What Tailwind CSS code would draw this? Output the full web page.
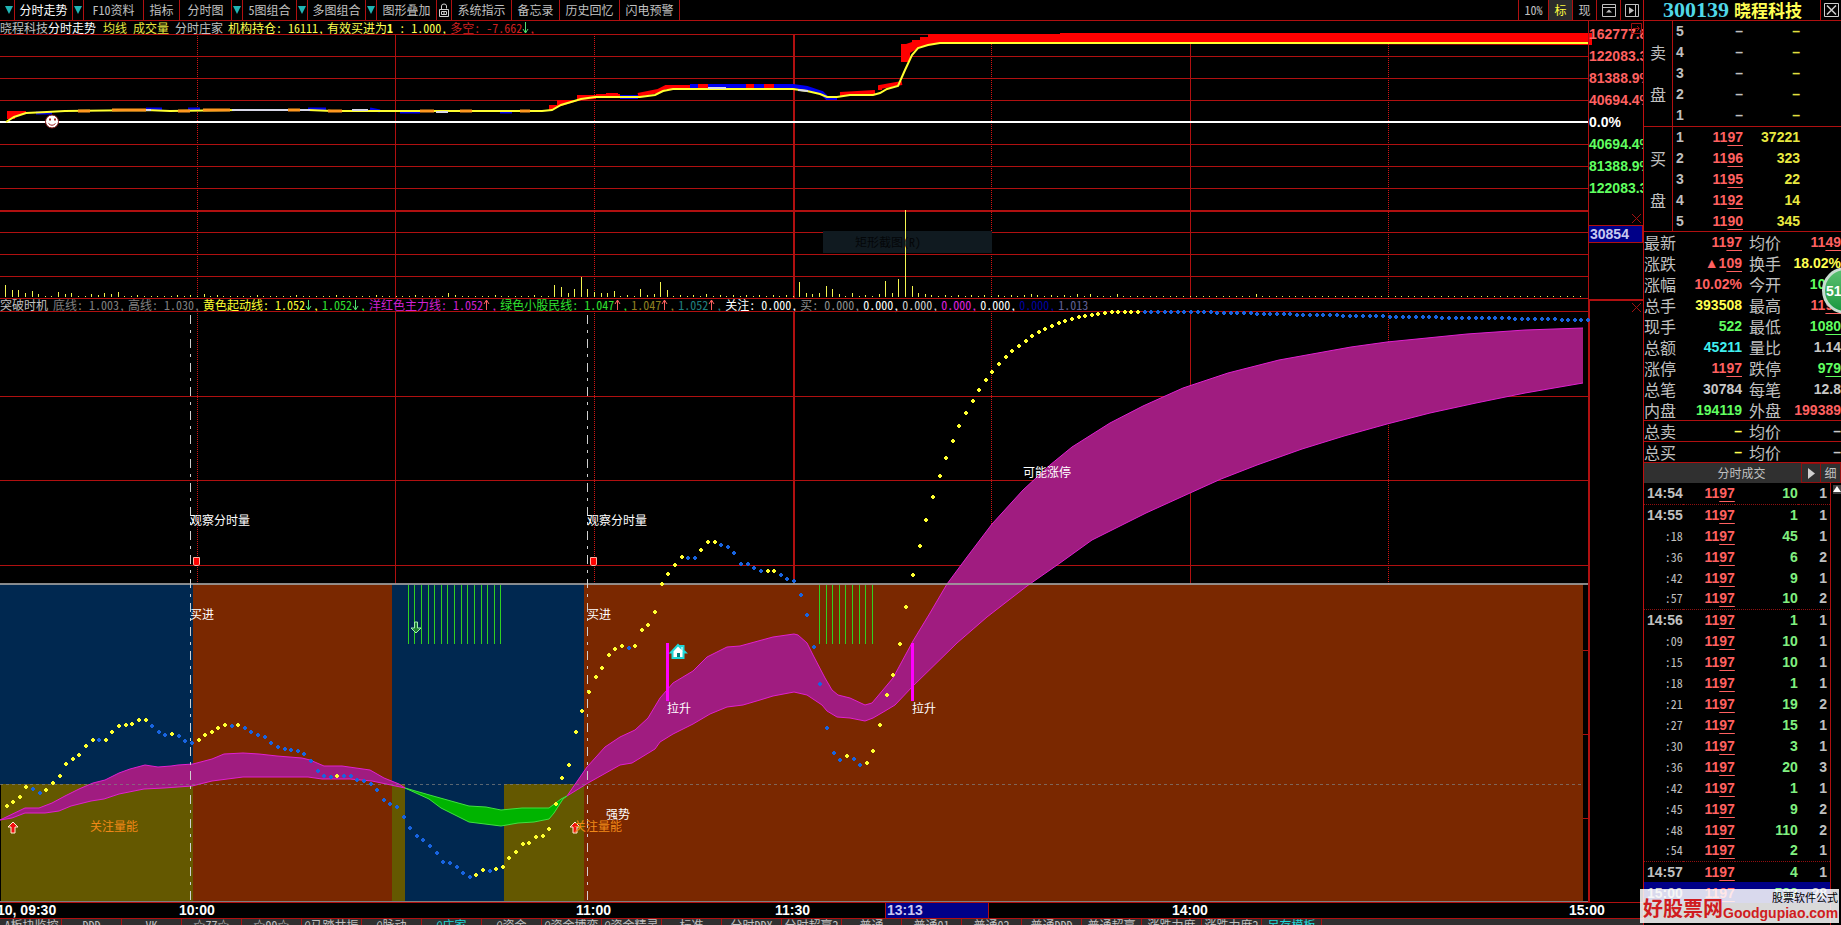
<!DOCTYPE html>
<html lang="zh-CN">
<head>
<meta charset="utf-8">
<title>300139 晓程科技 分时走势</title>
<script src="https://cdn.jsdelivr.net/npm/@tailwindcss/browser@4"></script>
</head>
<body class="relative flex h-screen overflow-hidden bg-black font-['Noto_Sans_Mono_CJK_SC','Noto_Sans_CJK_SC',sans-serif] text-xs text-[#c0c0c0]">

<main class="flex min-w-0 flex-1 flex-col">
  <!-- toolbar -->
  <nav class="flex h-[21px] shrink-0 border-b border-[#b01010] leading-4 whitespace-nowrap *:border-[#b01010]">
    <button class="flex w-[15px] items-center justify-center border-r pl-1" aria-label="菜单"><svg class="h-2 w-2" viewBox="0 0 8 8"><path d="M0 0h8L4 8z" fill="#20b4b4"/></svg></button>
    <button class="w-[58px] border-r text-white">分时走势</button>
    <button class="flex w-[11px] items-center justify-center border-r" aria-label="分时走势选项"><svg class="h-2 w-2" viewBox="0 0 8 8"><path d="M0 0h8L4 8z" fill="#20b4b4"/></svg></button>
    <button class="w-[60px] border-r">F10资料</button>
    <button class="w-[36px] border-r">指标</button>
    <button class="w-[52px] border-r">分时图</button>
    <button class="flex w-[11px] items-center justify-center border-r" aria-label="分时图选项"><svg class="h-2 w-2" viewBox="0 0 8 8"><path d="M0 0h8L4 8z" fill="#20b4b4"/></svg></button>
    <button class="w-[54px] border-r">5图组合</button>
    <button class="flex w-[11px] items-center justify-center border-r" aria-label="5图组合选项"><svg class="h-2 w-2" viewBox="0 0 8 8"><path d="M0 0h8L4 8z" fill="#20b4b4"/></svg></button>
    <button class="w-[58px] border-r">多图组合</button>
    <button class="flex w-[11px] items-center justify-center border-r" aria-label="多图组合选项"><svg class="h-2 w-2" viewBox="0 0 8 8"><path d="M0 0h8L4 8z" fill="#20b4b4"/></svg></button>
    <button class="w-[60px] border-r">图形叠加</button>
    <button class="flex w-[15px] items-center justify-center border-r" aria-label="锁定"><svg class="h-[14px] w-3" viewBox="0 0 12 14" fill="none" stroke="#d0d0d0"><path d="M1.500 6.500h9v7h-9zM3.500 8.500h5v3h-5zM3.500 6V3Q3.500 1 6 1t2.500 2v2.500M6 9v3"/></svg></button>
    <button class="w-[60px] border-r">系统指示</button>
    <button class="w-[48px] border-r">备忘录</button>
    <button class="w-[60px] border-r">历史回忆</button>
    <button class="w-[60px] border-r">闪电预警</button>
    <span class="flex-1"></span>
    <button class="w-[30px] border-l">10%</button>
    <button class="w-[24px] border-l bg-[#2c2c2c] text-[#ffff40]">标</button>
    <button class="w-[24px] border-l">现</button>
    <button class="flex w-[24px] items-center justify-center border-l" aria-label="上移"><svg class="h-[13px] w-[14px]" viewBox="0 0 14 13" fill="none" stroke="#c0c0c0"><path d="M.5.5h13v12H.5zM1 3.500h12"/><path d="M4 8.500h6L7 5.500z" fill="#c0c0c0" stroke="none"/></svg></button>
    <button class="flex w-[23px] items-center justify-center border-l" aria-label="右移"><svg class="h-[13px] w-[14px]" viewBox="0 0 14 13" fill="none" stroke="#c0c0c0"><path d="M.5.5h13v12H.5zM10.500 1v11"/><path d="M4 3v7l5-3.500z" fill="#c0c0c0" stroke="none"/></svg></button>
  </nav>

  <!-- price and volume panel -->
  <section class="flex min-h-0 flex-[278_1_0%]">
    <div class="flex min-w-0 flex-1 flex-col">
      <div class="flex h-[13px] shrink-0 leading-[13px] whitespace-nowrap">
        <span>晓程科技</span><span class="mr-[7px] text-white">分时走势</span>
        <span class="mr-[6px] text-[#e8e840]">均线</span><span class="mr-[6px] text-[#e8e840]">成交量</span>
        <span class="mr-[5px]">分时庄家</span>
        <span class="mr-[3px] text-[#ffff50]">机构持仓: 16111,</span>
        <span class="mr-[3px] text-[#ffff50]">有效买进为<b>1</b> : 1.000,</span>
        <span class="text-[#d02020]">多空: -7.662</span>
        <svg class="h-[13px] w-[7px]" viewBox="0 0 7 13" fill="none" stroke="#50e070"><path d="M3.500 1v11M1 8l2.500 4L6 8"/></svg><span class="text-[#d02020]">,</span>
      </div>
      <div class="relative min-h-0 flex-1">
        <svg id="price" class="absolute inset-0 h-full w-full overflow-visible" viewBox="0 34 1588 265" preserveAspectRatio="none" fill="none">
          <g stroke="#b01010" shape-rendering="crispEdges">
            <path d="M0 34.500H1588M0 56.500H1588M0 78.500H1588M0 100.500H1588M0 144.500H1588M0 166.500H1588M0 188.500H1588M0 232.500H1588M0 254.500H1588M0 276.500H1588M0 298.500H1588"/>
            <path d="M0 211H1588M794 34V298" stroke-width="2"/>
            <path d="M395.500 34V298M1190.500 34V298"/>
            <path d="M197.500 34V298M594.500 34V298M991.500 34V298M1388.500 34V298" stroke="#d01414" stroke-dasharray="1 1"/>
          </g>
          <path d="M823 231H992V253H823z" fill="#101a20"/>
          <path d="M0 122H1588" stroke="#fff" stroke-width="2" shape-rendering="crispEdges"/>
          <path d="M7 111H26V114L15 116V119H7zM549 110V105H557V100H577V95H596V99L581 100L561 106z" fill="#f00"/>
          <path d="M901 44H906L912 42V40H920V37H928V34H1060V33H1592V45H1588L940 43L920 47L910 53V62H901z" fill="#f00"/>
          <path d="M596 96H620M638 95L658 91L666 87H690M840 94L875 92M880 90V87L902 83" stroke="#f00" stroke-width="4"/>
          <path d="M620 97H638M690 86H793L807 88L822 93L827 98H837" stroke="#0000f0" stroke-width="4"/>
          <path d="M698 86H708M746 86H754M764 86H774M606 95H618" stroke="#f00" stroke-width="4"/>
          <path d="M36 113H52M146 109H162M188 109H200M308 109H326M370 109L380 111M400 112H420M500 112H512" stroke="#0000f0" stroke-width="3"/>
          <path d="M6 122L14 117L26 113L47 112L65 111L146 110L170 111L237 110L308 110L332 111H542L552 110L561 105L581 99L595 97H640L655 95L663 91L673 89H793L807 91L820 94L827 97H837L850 95H873L880 93L887 89L898 86L905 70L912 55L918 48L928 45L940 43H1588" stroke="#ffff30" stroke-width="2"/>
          <path d="M78 111H90M112 110H146M178 111H190M203 110H230M288 110H300M328 111H342M420 111H434M460 111H472M520 111H530" stroke="#ff9820" stroke-width="3"/>
          <path d="M146 110H151M232 110H288M300 110H310M352 110H368M436 112H448M708 88H726M798 90L808 91" stroke="#d8d8e8" stroke-width="2"/>
          <g shape-rendering="auto"><ellipse cx="52" cy="121.500" rx="6.500" ry="6.500" fill="#fff" stroke="#801010"/><path d="M49 119.500h2M54 119.500h2" stroke="#a02020" stroke-width="2"/><path d="M48.500 123.500Q52 127 55.500 123.500" stroke="#a02020"/></g>
          <path id="vol" stroke="#f4f450" shape-rendering="crispEdges"/>
        </svg>
        <span class="chart-label absolute -translate-y-1/2 leading-4 text-[#040608]" data-x="855" data-y="242">矩形截图(R)</span>
      </div>
    </div>
    <!-- price scale -->
    <div class="relative flex w-[55px] shrink-0 flex-col overflow-hidden border-l border-[#b01010] pt-[2px] font-['Liberation_Sans',sans-serif] text-sm leading-[22px] font-bold text-[#ff6060]">
      <span>162777.8%</span><span>122083.3%</span><span>81388.9%</span><span>40694.4%</span>
      <span class="text-white">0.0%</span>
      <span class="text-[#60ff60]">40694.4%</span><span class="text-[#60ff60]">81388.9%</span><span class="text-[#60ff60]">122083.3%</span>
      <div class="mt-[26px] -ml-px border border-[#b01010] bg-[#000088] pl-px leading-4 text-[#c8c8f0]">30854</div>
      <svg class="absolute top-[2px] right-px h-[11px] w-[11px]" viewBox="0 0 11 11" fill="none" stroke="#a01010"><path d="M.5.5h10v10H.5zM2 5.500h6M6 3l2.500 2.500L6 8"/></svg>
      <svg class="absolute top-[193px] right-[2px] h-[9px] w-[9px]" viewBox="0 0 9 9" fill="none" stroke="#a01010"><path d="M0 0l9 9M9 0L0 9"/></svg>
    </div>
  </section>

  <!-- indicator panel -->
  <section class="flex min-h-0 flex-[603_1_0%]">
    <div class="flex min-w-0 flex-1 flex-col">
      <div class="flex h-[12px] shrink-0 gap-[3px] leading-[12px] whitespace-nowrap text-white">
        <span class="mr-[2px] text-[#c0c0c0]">突破时机</span>
        <span class="text-[#808080]">底线: 1.003,</span>
        <span class="text-[#808080]">高线: 1.030,</span>
        <span class="flex text-[#ffff30]">黄色起动线: 1.052<svg class="h-[12px] w-2" viewBox="0 0 8 12" fill="none" stroke="#50e070"><path d="M3.500 1v10M1 7l2.500 4L6 7"/></svg>,</span>
        <span class="flex text-[#30e030]">1.052<svg class="h-[12px] w-2" viewBox="0 0 8 12" fill="none" stroke="#50e070"><path d="M3.500 1v10M1 7l2.500 4L6 7"/></svg>,</span>
        <span class="flex text-[#d020d0]">洋红色主力线: 1.052<svg class="h-[12px] w-2" viewBox="0 0 8 12" fill="none" stroke="#ff6060"><path d="M3.500 1v10M1 5l2.500-4L6 5"/></svg>,</span>
        <span class="flex text-[#30e030]">绿色小股民线: 1.047<svg class="h-[12px] w-2" viewBox="0 0 8 12" fill="none" stroke="#ff6060"><path d="M3.500 1v10M1 5l2.500-4L6 5"/></svg>,</span>
        <span class="flex text-[#908020]">1.047<svg class="h-[12px] w-2" viewBox="0 0 8 12" fill="none" stroke="#ff6060"><path d="M3.500 1v10M1 5l2.500-4L6 5"/></svg>,</span>
        <span class="flex text-[#208080]">1.052<svg class="h-[12px] w-2" viewBox="0 0 8 12" fill="none" stroke="#ff6060"><path d="M3.500 1v10M1 5l2.500-4L6 5"/></svg>,</span>
        <span>关注: 0.000,</span>
        <span class="text-[#909090]">买: 0.000,</span>
        <span>0.000,</span><span class="text-[#d0d0d0]">0.000,</span><span class="text-[#e020e0]">0.000,</span><span>0.000,</span><span class="text-[#0000a0]">0.000,</span><span class="text-[#606098]">1.013</span>
      </div>
      <div class="relative min-h-0 flex-1">
        <svg id="trend" class="absolute inset-0 h-full w-full overflow-visible" viewBox="0 311 1588 591" preserveAspectRatio="none" fill="none">
          <g stroke="#b01010" shape-rendering="crispEdges">
            <path d="M0 311.500H1588M0 396.500H1588M0 480.500H1588M0 565.500H1588M1583 650.500H1588M1583 734.500H1588M1583 818.500H1588"/>
            <path d="M794 311V584" stroke-width="2"/>
            <path d="M395.500 311V584M1190.500 311V584"/>
            <path d="M197.500 311V584M594.500 311V584M991.500 311V584M1388.500 311V584" stroke="#d01414" stroke-dasharray="1 1"/>
          </g>
          <g shape-rendering="crispEdges">
            <path d="M0 584H193V784H0zM392 584H584V784H392zM405 784H504V901H405z" fill="#002850"/>
            <path d="M1 784H193V901H1zM392 784H405V901H392zM504 784H584V901H504z" fill="#645800"/>
            <path d="M193 584H392V901H193zM584 584H1583V901H584z" fill="#7a2800"/>
            <path id="green" stroke="#30d020"/>
          </g>
          <path d="M0 820L25 808H39L52 803L65 796L79 789L93 783L105 780L119 773L130 769L145 765L158 767L171 766L178 765L193 764L212 759L224 754L243 753L259 754L277 756L302 758L310 760L324 766H342L370 770L384 778L399 784L405 788L372 781L350 779H322L308 777H243L212 781L192 786L164 788L144 789L119 794L104 799L91 801L71 806L59 811L45 813H25L12 818z" fill="#a01c80" stroke="#e020d0"/>
          <path d="M405 788L433 796L469 806L486 807L501 810L522 808H549L561 799L567 796L563 799L554 813L549 819L534 822L518 823L501 826L469 822L441 808L429 799z" fill="#00b400" stroke="#40e040"/>
          <path d="M1583 383L1525 393L1476 403L1430 413L1387 424L1344 436L1302 449L1257 465L1221 479L1190 493L1146 513L1120 526L1092 540L1060 563L1027 586L987 617L957 643L913 686L895 705L885 711L873 718L865 721L850 718L837 717L827 711L822 705L807 695L794 692L773 696L760 700L743 705L727 707L710 714L693 724L673 734L660 742L655 749L632 763L620 765L588 783L567 796L587 767L605 747L620 737L635 730L648 718L660 698L673 683L693 671L707 657L727 647L740 646L773 637L794 634L798 635L807 643L813 655L825 678L832 690L838 695L850 698L865 705L872 703L893 678L913 641L930 613L947 584L967 557L992 524L1023 490L1050 465L1072 447L1110 423L1143 406L1183 388L1228 373L1279 360L1351 347L1387 342L1467 334L1525 330L1583 328" fill="#a01c80" stroke="#e020d0"/>
          <g shape-rendering="crispEdges">
            <path d="M0 784.500H1583" stroke="#808080" stroke-opacity=".7" stroke-dasharray="3 3"/>
            <path d="M0 584H1588" stroke="#a0a0a0" stroke-opacity=".85" stroke-width="2"/>
            <path d="M0 901.500H1588" stroke="#808080"/>
            <path d="M190.500 315V901M587.500 315V901" stroke="#d0d0d0" stroke-dasharray="9 6 3 6"/>
            <path d="M667.500 643V701M912.500 643V701" stroke="#f0f" stroke-width="3"/>
          </g>
          <path id="dotsY" stroke="#ffff30" stroke-width="2" shape-rendering="crispEdges"/>
          <path id="dotsB" stroke="#1864e0" stroke-width="2" shape-rendering="crispEdges"/>
          <path d="M193.500 557.500h6v7l-1.500 1h-3l-1.500-1zM590.500 557.500h6v7l-1.500 1h-3l-1.500-1z" fill="#f00" stroke="#ffb0a0"/>
          <path d="M13 822l5 5h-3v6h-4v-6h-3zM575 822l5 5h-3v6h-4v-6h-3z" fill="#f01010" stroke="#fff0d0"/>
          <path d="M416 633l-5-5h3.500v-6h3v6h3.500z" fill="#208030" stroke="#a0f0b0"/>
          <path d="M671 652.500l7-7.500 2.500 2.500v-1.500h3v4.500l2 2h-2v5.500h-11v-5.500z" fill="#fff" stroke="#20d8d8" stroke-width="2"/><path d="M677 653h3v4h-3z" fill="#008080"/>
        </svg>
        <div class="leading-4 whitespace-nowrap text-white">
          <span class="chart-label absolute -translate-y-1/2" data-x="190" data-y="520">观察分时量</span>
          <span class="chart-label absolute -translate-y-1/2" data-x="587" data-y="520">观察分时量</span>
          <span class="chart-label absolute -translate-y-1/2" data-x="190" data-y="614">买进</span>
          <span class="chart-label absolute -translate-y-1/2" data-x="587" data-y="614">买进</span>
          <span class="chart-label absolute -translate-y-1/2" data-x="667" data-y="708">拉升</span>
          <span class="chart-label absolute -translate-y-1/2" data-x="912" data-y="708">拉升</span>
          <span class="chart-label absolute -translate-y-1/2" data-x="1023" data-y="472">可能涨停</span>
          <span class="chart-label absolute -translate-y-1/2 text-[#f08818]" data-x="90" data-y="826">关注量能</span>
          <span class="chart-label absolute -translate-y-1/2 text-[#f08818]" data-x="574" data-y="826">关注量能</span>
          <span class="chart-label absolute -translate-y-1/2" data-x="606" data-y="814">强势</span>
        </div>
      </div>
    </div>
    <div class="w-[55px] shrink-0 border-t-2 border-l-2 border-[#b01010]">
      <svg class="mt-[2px] ml-auto mr-[2px] h-[9px] w-[9px]" viewBox="0 0 9 9" fill="none" stroke="#a01010"><path d="M0 0l9 9M9 0L0 9"/></svg>
    </div>
  </section>

  <!-- time axis -->
  <div class="relative h-4 shrink-0 border-t border-[#b01010] font-['Liberation_Sans',sans-serif] text-sm leading-[15px] font-bold whitespace-nowrap text-white">
    <span class="axis-label absolute" data-x="-3">10, 09:30</span>
    <span class="axis-label absolute" data-x="179">10:00</span>
    <span class="axis-label absolute" data-x="576">11:00</span>
    <span class="axis-label absolute" data-x="775">11:30</span>
    <span class="axis-label absolute h-[15px] w-[104px] border-x border-[#b01010] bg-[#000088] pl-px text-[#c8c8f0]" data-x="885">13:13</span>
    <span class="axis-label absolute" data-x="1172">14:00</span>
    <span class="axis-label absolute" data-x="1569">15:00</span>
  </div>

  <!-- template tabs, cut off by the window's lower edge -->
  <div class="flex h-[7px] shrink-0 overflow-hidden border-t border-[#b01010] bg-[#303030] pl-[2px] leading-3 whitespace-nowrap *:h-3 *:w-[60px] *:shrink-0 *:border-r *:border-[#b01010]">
    <button>A板块监控</button><button>DDD</button><button>VK</button><button>☆77☆</button><button>☆99☆</button><button>@马踏共振</button><button>@脉动</button><button class="text-[#20d8d8]">@庄家</button><button>@资金</button><button>@资金博弈</button><button>@资金精灵</button><button>标准</button><button>分时DDX</button><button>分时超赢2</button><button>普通</button><button>普通01</button><button>普通02</button><button>普通DDD</button><button>普通超赢</button><button>涨跌力度</button><button>涨跌力度2</button><button class="text-[#20d8d8]">另存模板</button>
  </div>
</main>

<!-- quote panel -->
<aside class="flex w-[198px] shrink-0 flex-col overflow-hidden border-l border-[#c01010]">
  <header class="flex h-[21px] shrink-0 items-center border-b border-[#b01010] whitespace-nowrap">
    <h1 class="flex flex-1 items-center gap-[5px] pl-[19px]"><span class="font-['Liberation_Serif',serif] text-[22px] leading-5 font-bold text-[#50d8e8]">300139</span><span class="text-[17px] leading-5 font-bold text-[#ffff54]">晓程科技</span></h1>
    <button class="flex h-full w-[21px] items-center justify-center border-l border-[#b01010]" aria-label="关闭"><svg class="h-[14px] w-[15px]" viewBox="0 0 15 14" fill="none" stroke="#d0d0d0"><path d="M.5.5h14v13H.5z"/><path d="M3 2.500l9 9M12 2.500l-9 9" stroke-width="1.500"/></svg></button>
  </header>
  <section class="flex h-[106px] shrink-0 border-b border-[#b01010]">
    <div class="flex w-[29px] flex-col items-center gap-[21px] border-r border-[#b01010] pt-[21px] text-base leading-[21px]"><span>卖</span><span>盘</span></div>
    <table class="flex-1 font-['Liberation_Sans',sans-serif] text-sm leading-[21px] font-bold"><tbody id="sell"></tbody></table>
  </section>
  <section class="flex h-[105px] shrink-0 border-b border-[#b01010]">
    <div class="flex w-[29px] flex-col items-center gap-[21px] border-r border-[#b01010] pt-[21px] text-base leading-[21px]"><span>买</span><span>盘</span></div>
    <table class="flex-1 font-['Liberation_Sans',sans-serif] text-sm leading-[21px] font-bold"><tbody id="buy"></tbody></table>
  </section>
  <dl id="info" class="shrink-0 text-base leading-[20px] whitespace-nowrap"></dl>
  <div class="flex h-[20px] shrink-0 bg-[#303030] text-center leading-5">
    <h2 class="flex-1 pl-[38px]">分时成交</h2>
    <button class="flex w-[20px] items-center justify-center border border-[#901010]" aria-label="展开"><svg class="h-[11px] w-[7px]" viewBox="0 0 7 11"><path d="M0 0v11l7-5.500z" fill="#d0d0d0"/></svg></button>
    <button class="w-[20px] border-y border-r border-[#901010] leading-4">细</button>
  </div>
  <div class="flex min-h-0 flex-1">
    <div class="min-w-0 flex-1 overflow-hidden border-r border-[#b01010]">
      <table class="w-full border-collapse font-['Liberation_Sans',sans-serif] text-sm leading-[21px] font-bold"><tbody id="ticks"></tbody></table>
    </div>
    <div class="w-[10px] pt-[2px] pl-[2px]"><button class="block h-[9px] w-2 bg-[#404040]" aria-label="上滚"><svg class="h-[9px] w-2" viewBox="0 0 8 9"><path d="M0 7l4-6 4 6z" fill="#fff"/></svg></button></div>
  </div>
</aside>

<!-- floating badge -->
<button class="absolute top-[267px] -right-[28px] h-[47px] w-[47px] rounded-full border-[3px] border-[#c8dcd0] bg-linear-to-b from-[#58c070] to-[#189840] pl-px text-left font-['Liberation_Sans',sans-serif] text-sm font-bold text-white">51</button>

<!-- site watermark -->
<a href="#" class="absolute right-[2px] bottom-[2px] flex h-[34px] w-[199px] items-end bg-white/85 pl-[3px] font-bold whitespace-nowrap text-[#d01c20]">
  <span class="text-xl leading-[30px]">好股票网</span>
  <span class="flex flex-col items-end"><span class="text-[11px] leading-3 font-normal text-black">股票软件公式</span><span class="font-['Liberation_Sans',sans-serif] text-sm leading-5 font-bold">Goodgupiao.com</span></span>
</a>

<script>
const STEP = 1588 / 240;
const $ = id => document.getElementById(id);

// Volume bars, one per minute
const vol = {1:12,2:7,3:7,4:4,5:6,6:3,9:5,10:3,11:4,14:3,16:4,17:3,18:5,29:2,31:3,68:4,84:12,85:10,86:4,87:8,88:20,89:8,90:5,91:4,92:4,93:6,97:8,98:2,99:3,100:15,101:7,107:3,121:15,122:4,123:3,124:4,125:11,126:8,127:3,129:4,133:3,134:16,135:4,136:18,137:87,138:11,139:4,140:3,156:3,163:3,165:3,169:3,190:3};
let d = '';
for (let i = 1; i < 240; i++) {
  const h = vol[i] || (i < 84 && i % 3 ? 1 : i < 166 && i % 2 ? 2 : 1);
  d += `M${Math.floor(i * STEP) - .5} ${297 - h}v${h}`;
}
$('vol').setAttribute('d', d);

// Green sell strokes
d = '';
for (let i = 62; i <= 76; i++) d += `M${Math.floor(i * STEP) - 1.5} 585V644`;
for (let i = 124; i <= 132; i++) d += `M${Math.floor(i * STEP) - .5} 585V644`;
$('green').setAttribute('d', d);

// Dotted line: thirds of a unit from y = 500; b marks the falling colour
const dots = '919 907 892 862 866b 878b 871 850 829 793 778 766 739 721 721b 721 697 679 676 673 661 661 679b 697b 706b 703 709b 724b 730b 721 706 697 685 676 679b 676 685b 697b 706b 712b 730b 742b 748b 751b 754b 763b 784b 814b 829b 830b 827 829b 829b 841b 844b 853b 871b 901b 913b 922b 952b 985b 1009b 1021b 1039b 1060b 1087b 1090b 1102b 1120b 1132b 1126 1111 1114b 1108 1102 1075 1057 1033 1030 1012 1009 988 913 835 796 697 634 577 532 505 466 448 439 445b 439 391 376 337 253 223 196 172 175b 175b 151 127 127 136b 142b 160b 193b 193b 205b 214b 214 214 226b 238b 244b 286b 346b 442b 553b 685b 760b 781b 769 778b 796b 790 754 676 586 526 433 322 226 139 61 -8 -71 -125 -176 -221 -260 -296 -329 -359 -383 -407 -428 -446 -461 -476 -491 -503 -512 -521 -530 -536 -542 -548 -551 -554 -557 -560 -563 -563 -563 -563 -565'.split(' ');
while (dots.length < 240) {
  const n = dots.length;
  dots.push((n < 183 ? -563 : n < 189 ? -560 : n < 195 ? -557 : n < 202 ? -554 : n < 209 ? -551 : n < 217 ? -548 : n < 228 ? -545 : n < 235 ? -542 : -539) + 'b');
}
let dy = '', db = '';
dots.forEach((s, k) => {
  const x = Math.round((k + 1) * STEP), y = Math.round(parseInt(s) / 3 + 500);
  const m = `M${x - 2} ${y}h4M${x} ${y - 2}v4`;
  if (s.endsWith('b')) db += m; else dy += m;
});
$('dotsY').setAttribute('d', dy);
$('dotsB').setAttribute('d', db);

// Chart labels are placed in chart units so they follow the drawing
document.querySelectorAll('.chart-label').forEach(e => {
  const v = e.closest('.flex-1').querySelector('svg').viewBox.baseVal;
  e.style.left = e.dataset.x / v.width * 100 + '%';
  e.style.top = (e.dataset.y - v.y) / v.height * 100 + '%';
});
document.querySelectorAll('.axis-label').forEach(e => { e.style.left = e.dataset.x / 1643 * 100 + '%'; });

const ul = s => s.slice(0, -2) + '<span class="underline underline-offset-[3px]">' + s.slice(-2) + '</span>';

$('sell').innerHTML = [5, 4, 3, 2, 1].map(n => `<tr class="h-[21px]"><th class="w-[20px] p-0 pl-[3px] text-left">${n}</th><td class="w-[50px] p-0 text-right">–</td><td class="w-[57px] p-0 text-right text-[#e0e040]">–</td><td></td></tr>`).join('');
$('buy').innerHTML = [['1197', '37221'], ['1196', '323'], ['1195', '22'], ['1192', '14'], ['1190', '345']].map(([p, v], i) => `<tr class="h-[21px]"><th class="w-[20px] p-0 pl-[3px] text-left">${i + 1}</th><td class="w-[50px] p-0 text-right text-[#ff6060]">${ul(p)}</td><td class="w-[57px] p-0 text-right text-[#e8e840]">${v}</td><td></td></tr>`).join('');

const R = 'text-[#ff6060]', G = 'text-[#60ff60]', Y = 'text-[#ffff50]', C = 'text-[#40f0f0]', W = 'text-[#c8c8c8]';
const info = [
  ['最新', ul('1197'), R, '均价', ul('1149'), R],
  ['涨跌', '▲' + ul('109'), R, '换手', '18.02%', Y],
  ['涨幅', '10.02%', R, '今开', ul('1080'), G],
  ['总手', '393508', Y, '最高', ul('1197'), R],
  ['现手', '522', G, '最低', ul('1080'), G],
  ['总额', '45211', C, '量比', '1.14', W],
  ['涨停', ul('1197'), R, '跌停', ul('979'), G],
  ['总笔', '30784', W, '每笔', '12.8', W],
  ['内盘', '194119', G, '外盘', '199389', R],
  ['总卖', '–', Y, '均价', '–', W],
  ['总买', '–', Y, '均价', '–', W]];
const num = "text-right font-['Liberation_Sans',sans-serif] text-sm leading-[20px] font-bold ";
$('info').innerHTML = info.map((r, i) => `<div class="${i > 7 ? 'flex h-[21px] border-b border-[#b01010]' : 'flex h-[21px]'}"><dt class="w-[32px]">${r[0]}</dt><dd class="w-[66px] ${num + r[2]}">${r[1]}</dd><dt class="ml-[7px]">${r[3]}</dt><dd class="flex-1 ${num + r[5]}">${r[4]}</dd></div>`).join('');

const ticks = '14:54 10 1,14:55 1 1,:18 45 1,:36 6 2,:42 9 1,:57 10 2,14:56 1 1,:09 10 1,:15 10 1,:18 1 1,:21 19 2,:27 15 1,:30 3 1,:36 20 3,:42 1 1,:45 9 2,:48 110 2,:54 2 1,14:57 4 1,15:00 522 28'.split(',');
$('ticks').innerHTML = ticks.map((t, i) => {
  const [time, v, n] = t.split(' ');
  const row = time === '15:00' ? 'h-[21px] bg-[#000088]' : time[0] !== ':' && i ? 'h-[21px] border-t border-dotted border-[#901010]' : 'h-[21px]';
  const th = time[0] === ':' ? "w-[38px] p-0 text-right font-['Noto_Sans_Mono_CJK_SC','Noto_Sans_CJK_SC',sans-serif] text-xs leading-5 font-normal" : 'w-[38px] p-0 pl-[3px] text-left leading-5';
  return `<tr class="${row}"><th class="${th}">${time}</th><td class="w-[52px] p-0 text-right leading-5 text-[#ff6060]">${ul('1197')}</td><td class="w-[63px] p-0 text-right leading-5 text-[#80f080]">${v}</td><td class="p-0 pr-[3px] text-right leading-5">${n}</td></tr>`;
}).join('');
</script>
</body>
</html>
